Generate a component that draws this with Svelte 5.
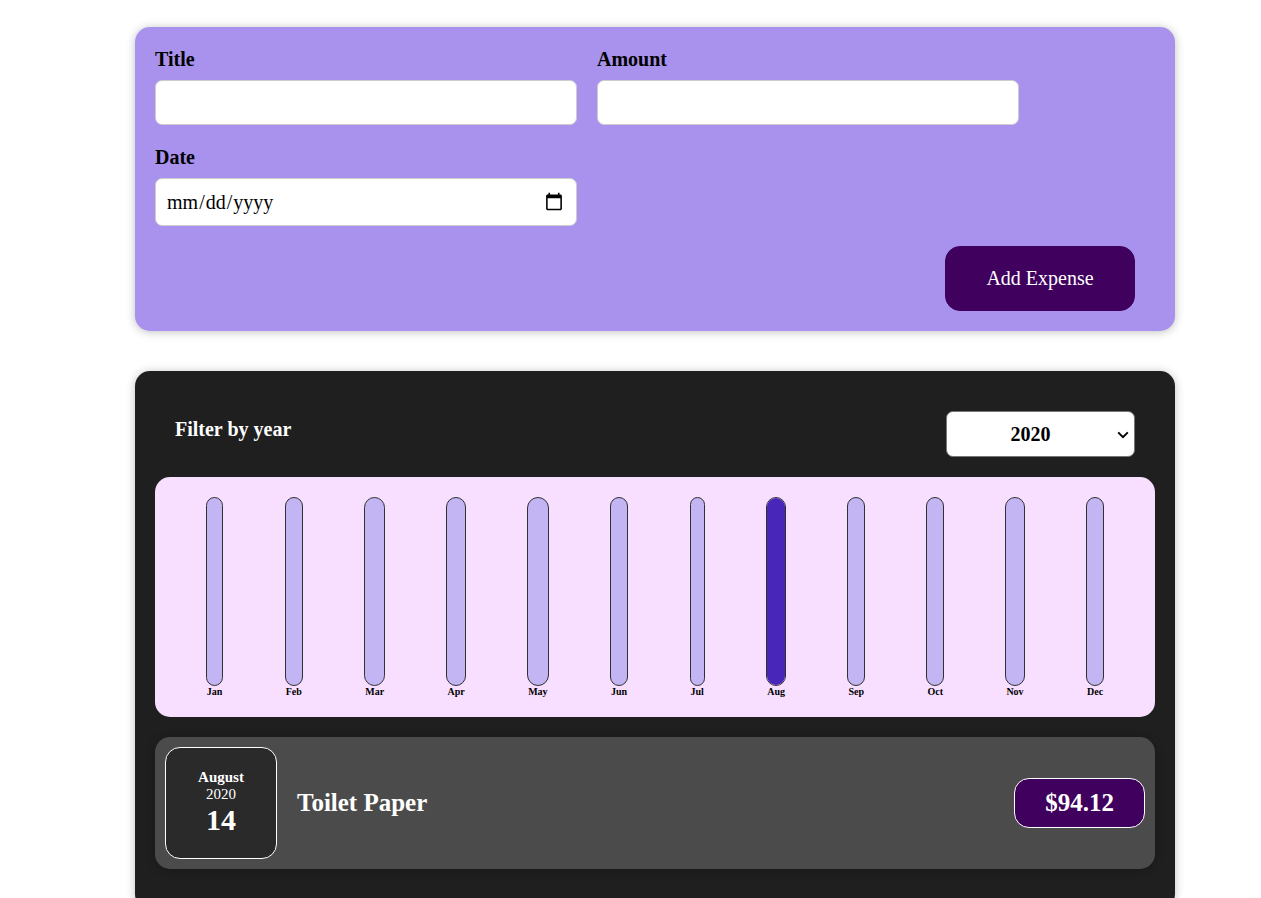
<script>
  const months = ['Jan', 'Feb', 'Mar', 'Apr', 'May', 'Jun', 'Jul', 'Aug', 'Sep', 'Oct', 'Nov', 'Dec'];
  const years = ['2019', '2020', '2021', '2022'];

  let expenses = $state([{ title: 'Toilet Paper', amount: 94.12, year: 2020, month: 7, day: 14 }]);
  let title = $state('');
  let amount = $state('');
  let date = $state('');
  let year = $state('2020');

  const shown = $derived(expenses.filter((e) => String(e.year) === year));
  const totals = $derived(
    months.map((_, i) => shown.filter((e) => e.month === i).reduce((sum, e) => sum + e.amount, 0))
  );
  const highest = $derived(Math.max(...totals, 1));

  function monthName(e) {
    return new Date(e.year, e.month, e.day).toLocaleString('en-US', { month: 'long' });
  }

  function addExpense(event) {
    event.preventDefault();
    if (!title || !amount || !date) return;
    const [y, m, d] = date.split('-').map(Number);
    expenses.push({ title, amount: Number(amount), year: y, month: m - 1, day: d });
    title = '';
    amount = '';
    date = '';
  }
</script>

<main>
  <form class="card new-expense" onsubmit={addExpense}>
    <div class="fields">
      <div class="field">
        <label for="title">Title</label>
        <input id="title" type="text" bind:value={title} />
      </div>
      <div class="field">
        <label for="amount">Amount</label>
        <input id="amount" type="number" min="0.01" step="0.01" bind:value={amount} />
      </div>
      <div class="field">
        <label for="date">Date</label>
        <input id="date" type="date" bind:value={date} />
      </div>
    </div>
    <div class="actions">
      <button type="submit">Add Expense</button>
    </div>
  </form>

  <section class="card expenses">
    <div class="filter">
      <label for="year">Filter by year</label>
      <div class="select">
        <select id="year" bind:value={year}>
          {#each years as y}
            <option value={y}>{y}</option>
          {/each}
        </select>
        <svg viewBox="0 0 12 8" width="12" height="8" aria-hidden="true">
          <path d="M1.2 1.4 L6 6.2 L10.8 1.4" fill="none" stroke="#000" stroke-width="2" />
        </svg>
      </div>
    </div>

    <div class="chart">
      {#each months as month, i}
        <div class="month">
          <div class="bar">
            <div class="fill" style="height: {(totals[i] / highest) * 100}%"></div>
          </div>
          <span>{month}</span>
        </div>
      {/each}
    </div>

    <ul>
      {#each shown as expense}
        <li>
          <div class="date">
            <strong>{monthName(expense)}</strong>
            <span>{expense.year}</span>
            <b>{expense.day}</b>
          </div>
          <h2>{expense.title}</h2>
          <div class="price">${expense.amount.toFixed(2)}</div>
        </li>
      {/each}
    </ul>
  </section>
</main>

<style>
  :global(body) {
    background: #fff;
  }

  main,
  main * {
    box-sizing: border-box;
    font-family: 'Liberation Serif', 'Times New Roman', serif;
  }

  main {
    display: flex;
    flex-direction: column;
    gap: 40px;
    padding: 27px 86px 40px 135px;
  }

  .card {
    padding: 20px;
    border-radius: 15px;
    box-shadow: 0 1px 10px rgba(0, 0, 0, 0.25);
  }

  .new-expense {
    display: flex;
    flex-direction: column;
    gap: 20px;
    background: #a892ee;
  }

  .fields {
    display: flex;
    flex-wrap: wrap;
    gap: 20px;
  }

  .field {
    display: flex;
    flex-direction: column;
    gap: 8px;
    flex: 0 1 422px;
  }

  label {
    font-size: 20px;
    line-height: 25px;
    font-weight: bold;
  }

  input {
    width: 100%;
    height: 45px;
    padding: 10px;
    border: 1px solid #ccc;
    border-radius: 7px;
    background: #fff;
    color: #000;
    font-size: 20px;
  }

  input[type='date'] {
    height: 48px;
  }

  .actions {
    display: flex;
    justify-content: flex-end;
    padding-right: 20px;
  }

  button {
    min-width: 190px;
    padding: 20px 40px;
    border: 1px solid #40005d;
    border-radius: 15px;
    background: #40005d;
    color: #fff;
    font-size: 20px;
    line-height: 23px;
    cursor: pointer;
  }

  .expenses {
    background: #1f1f1f;
    color: #fff;
  }

  .filter {
    display: flex;
    align-items: center;
    justify-content: space-between;
    padding: 20px;
  }

  .filter label {
    margin-bottom: 10px;
  }

  .select {
    position: relative;
    display: flex;
  }

  .select svg {
    position: absolute;
    top: 20px;
    right: 6px;
    pointer-events: none;
  }

  select {
    appearance: none;
    width: 189px;
    height: 46px;
    padding: 0 20px 0 0;
    border: 1px solid #767676;
    border-radius: 7px;
    background: #fff;
    color: #000;
    font-size: 20px;
    font-weight: bold;
    text-align: center;
  }

  .chart {
    display: flex;
    justify-content: space-around;
    height: 240px;
    padding: 20px;
    border-radius: 15px;
    background: #f8dfff;
    color: #000;
  }

  .month {
    display: flex;
    flex-direction: column;
    align-items: center;
    font-size: 10px;
    line-height: 11px;
    font-weight: bold;
  }

  .month span {
    padding: 0 1px;
  }

  .bar {
    display: flex;
    flex-direction: column;
    justify-content: flex-end;
    flex: 1;
    width: 100%;
    overflow: hidden;
    border: 1px solid #313131;
    border-radius: 12px;
    background: #c3b4f3;
  }

  .fill {
    background: #4826b9;
  }

  ul {
    display: flex;
    flex-direction: column;
    gap: 20px;
    margin: 20px 0;
    padding: 0;
    list-style: none;
  }

  li {
    display: flex;
    align-items: center;
    gap: 20px;
    padding: 10px;
    border-radius: 15px;
    background: #4b4b4b;
    box-shadow: 0 1px 10px rgba(0, 0, 0, 0.25);
  }

  .date {
    display: flex;
    flex-direction: column;
    align-items: center;
    justify-content: center;
    width: 112px;
    height: 112px;
    border: 1px solid #fff;
    border-radius: 15px;
    background: #2a2a2a;
    font-size: 15px;
    line-height: 17px;
  }

  .date b {
    font-size: 30px;
    line-height: 34px;
  }

  h2 {
    flex: 1;
    margin: 0;
    font-size: 25px;
    line-height: 28px;
  }

  .price {
    padding: 10px 30px;
    border: 1px solid #fff;
    border-radius: 15px;
    background: #40005d;
    font-size: 25px;
    line-height: 28px;
    font-weight: bold;
  }
</style>
